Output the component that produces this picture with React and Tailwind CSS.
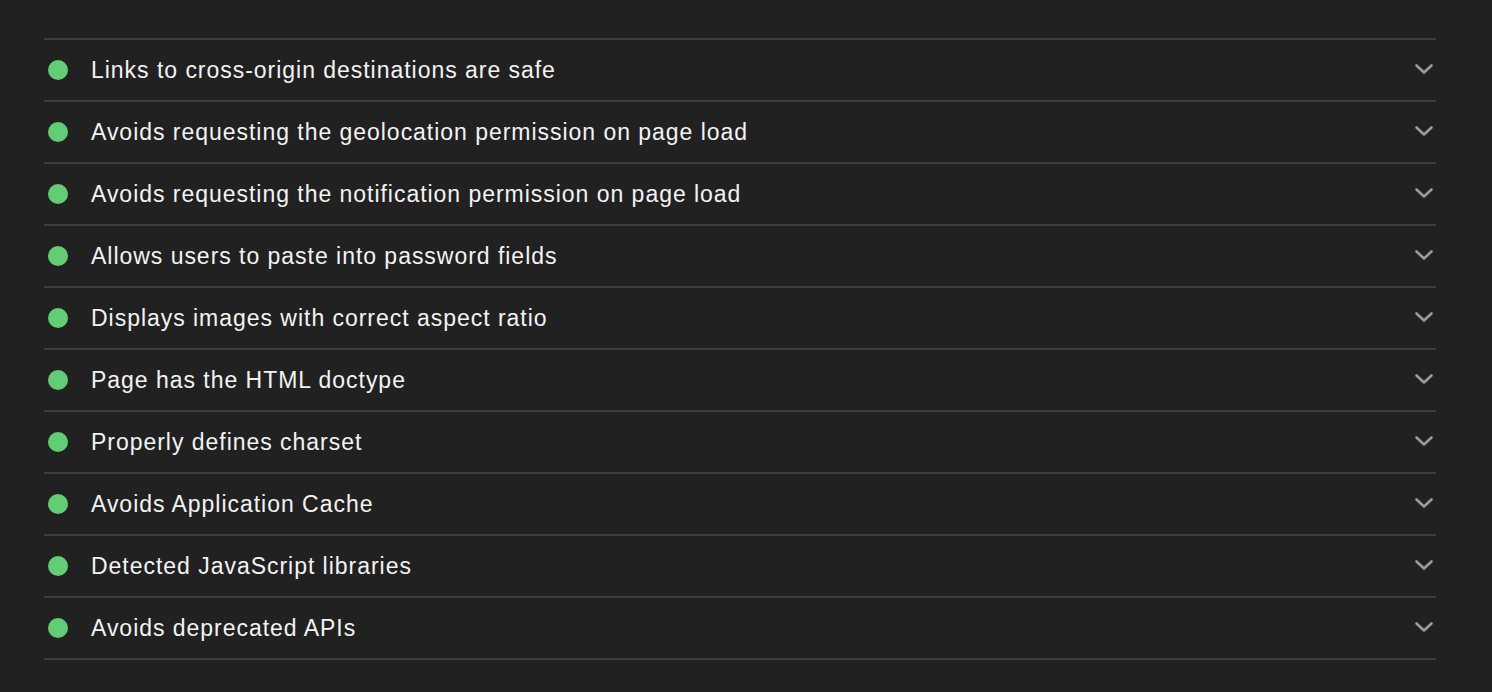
const items = [
  "Links to cross-origin destinations are safe",
  "Avoids requesting the geolocation permission on page load",
  "Avoids requesting the notification permission on page load",
  "Allows users to paste into password fields",
  "Displays images with correct aspect ratio",
  "Page has the HTML doctype",
  "Properly defines charset",
  "Avoids Application Cache",
  "Detected JavaScript libraries",
  "Avoids deprecated APIs",
];

export default function App() {
  return (
    <div className="w-[1492px] h-[692px] bg-[#212121] pt-[38px] pl-[44px]" style={{ fontFamily: '"Liberation Sans", Arial, sans-serif' }}>
      <div className="w-[1392px] border-t-2 border-[#3d3d3d]">
        {items.map((t) => (
          <div key={t} className="h-[62px] border-b-2 border-[#3d3d3d] flex items-center pl-[4px] pr-[2px]">
            <div className="w-[20px] h-[20px] rounded-full bg-[#62cd74] shrink-0" />
            <div className="ml-[23px] text-[23px] tracking-[0.97px] text-[#f3f3f3] flex-1 leading-none">{t}</div>
            <svg width="20" height="12" viewBox="0 0 20 12" className="mb-[2px]">
              <path d="M2.5 2.5 L10 9.5 L17.5 2.5" fill="none" stroke="#9b9b9b" strokeWidth="2.6" strokeLinecap="round" strokeLinejoin="round" />
            </svg>
          </div>
        ))}
      </div>
    </div>
  );
}
